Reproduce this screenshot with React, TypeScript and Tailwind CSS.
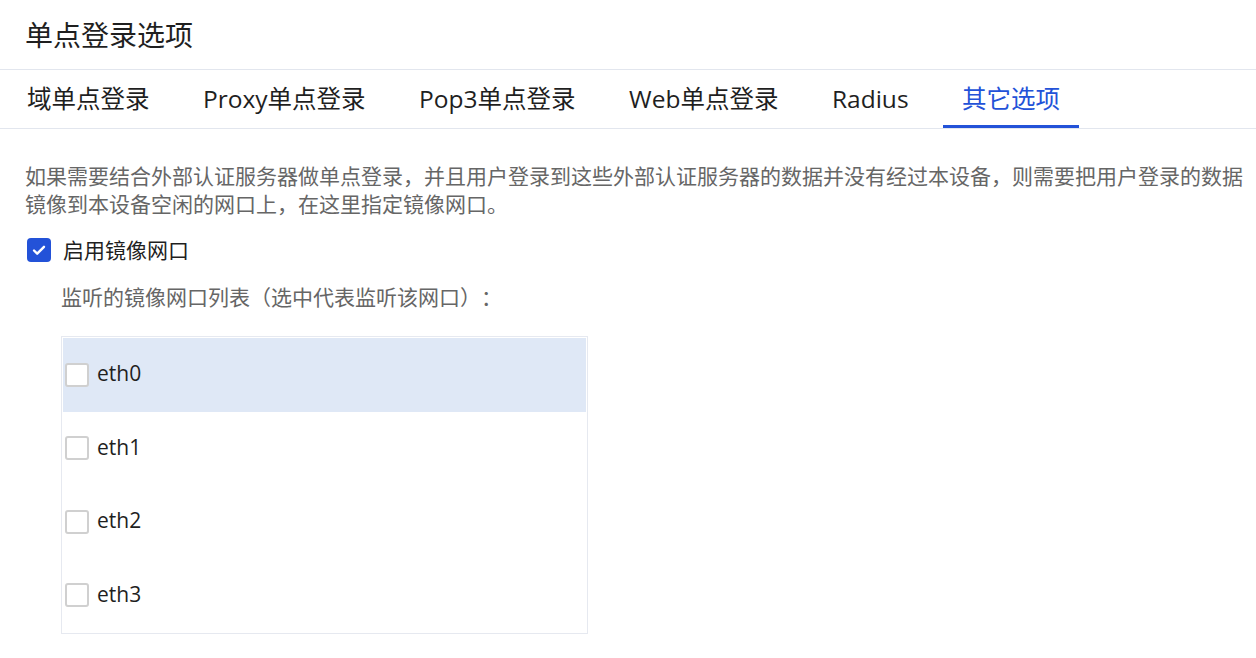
import { useState } from 'react';

const TABS = ['域单点登录', 'Proxy单点登录', 'Pop3单点登录', 'Web单点登录', 'Radius', '其它选项'];
const PORTS = ['eth0', 'eth1', 'eth2', 'eth3'];

const FONT = { fontFamily: '"Open Sans", "Noto Sans CJK SC", sans-serif' };

function CheckBox({ checked }: { checked: boolean }) {
  if (checked) {
    return (
      <span className="flex h-[24px] w-[24px] items-center justify-center rounded-[4px] bg-[#2352d8]">
        <svg width="16" height="16" viewBox="0 0 16 16" fill="none">
          <path d="M3 8.5l3.2 3.2L13 4.8" stroke="white" strokeWidth="2.4" strokeLinecap="round" strokeLinejoin="round" />
        </svg>
      </span>
    );
  }
  return <span className="block h-[24px] w-[24px] rounded-[3px] border-2 border-[#d0d0d0] bg-white" />;
}

export default function App() {
  const [active] = useState(5);

  return (
    <div className="min-h-screen bg-white text-[#1f1f1f] [text-spacing-trim:space-all]" style={FONT}>
      {/* 标题 */}
      <div className="flex h-[70px] items-center border-b border-[#e2e6ee] pl-[25px]">
        <h1 className="text-[28px] leading-none">单点登录选项</h1>
      </div>

      {/* 选项卡 */}
      <div className="flex h-[59px] gap-[15.5px] border-b border-[#e2e6ee] pl-[8px]">
        {TABS.map((tab, i) => (
          <button
            key={tab}
            className={
              i === active
                ? 'flex items-center border-b-[3px] border-[#2352d8] px-[19px] pt-[3px] text-[24.5px] text-[#2352d8]'
                : 'flex items-center border-b-[3px] border-transparent px-[19px] pt-[3px] text-[24.5px]'
            }
          >
            {tab}
          </button>
        ))}
      </div>

      {/* 内容 */}
      <div className="pl-[25px] pt-[33px]">
        <p className="text-[21px] leading-[28px] text-[#666]">
          如果需要结合外部认证服务器做单点登录，并且用户登录到这些外部认证服务器的数据并没有经过本设备，则需要把用户登录的数据镜像到本设备空闲的网口上，在这里指定镜像网口。
        </p>

        <div className="mt-[19px] flex items-center gap-[12px] pl-[2px]">
          <CheckBox checked />
          <span className="text-[21px] leading-[26px]">启用镜像网口</span>
        </div>

        <p className="mt-[20px] pl-[36px] text-[21px] leading-[28px] text-[#666]">监听的镜像网口列表（选中代表监听该网口）：</p>

        <div className="ml-[36px] mt-[25px] w-[527px] border border-[#e6e9f0] p-[1px]">
          {PORTS.map((port, i) => (
            <div
              key={port}
              className={
                i === 0
                  ? 'flex h-[73.5px] items-center gap-[8px] bg-[#dfe8f6] pl-[2px]'
                  : 'flex h-[73.5px] items-center gap-[8px] pl-[2px]'
              }
            >
              <CheckBox checked={false} />
              <span className="pb-[2px] text-[21px] leading-none">{port}</span>
            </div>
          ))}
        </div>
      </div>
    </div>
  );
}
